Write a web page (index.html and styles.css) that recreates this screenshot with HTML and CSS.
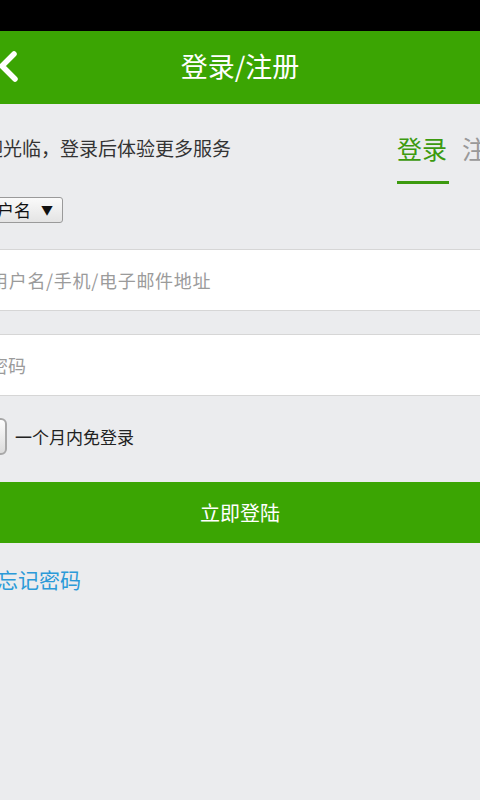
FILE: index.html
```html
<!DOCTYPE html>
<html>
<head>
    <title>登录/注册</title>
    <link rel="stylesheet" href="styles.css">
</head>
<body>
    <div class="status-bar"></div>
    <div class="header">
        <svg class="back" width="24" height="34" viewBox="0 0 24 34">
            <polyline points="18,4 6,16 19,29" fill="none" stroke="#fff" stroke-width="5.5" stroke-linecap="round" stroke-linejoin="round"/>
        </svg>
        <h1>登录/注册</h1>
        <span></span>
    </div>

    <div class="content">
        <div class="top-row">
            <p class="welcome">欢迎光临，登录后体验更多服务</p>
            <div class="tabs">
                <span class="tab active">登录</span>
                <span class="tab">注册</span>
            </div>
        </div>

        <div class="select">用户名<span class="arrow">▼</span></div>

        <div class="field wide">用户名/手机/电子邮件地址</div>
        <div class="field">密码</div>

        <div class="remember">
            <span class="checkbox"></span>
            <span>一个月内免登录</span>
        </div>

        <div class="login-btn">立即登陆</div>

        <a class="forgot" href="#">忘记密码</a>
    </div>
</body>
</html>
```

FILE: styles.css
```css
body {
    margin: 0;
    width: 480px;
    height: 800px;
    overflow: hidden;
    background: #ebecee;
    font-family: "Noto Sans CJK SC", sans-serif;
    color: #333;
}

.status-bar {
    height: 31px;
    background: #000;
}

.header {
    height: 73px;
    background: #3ba503;
    display: grid;
    grid-template-columns: 60px 1fr 60px;
    align-items: center;
}

.back {
    margin-left: -4px;
    margin-top: -1px;
}

.header h1 {
    margin: 0 0 4px;
    text-align: center;
    color: #fff;
    font-size: 27px;
    font-weight: normal;
    line-height: 30px;
}

.content {
    margin-left: -40px;
    width: 560px;
}

.top-row {
    display: flex;
    padding-top: 29px;
}

.welcome {
    margin: 0 0 0 5px;
    font-size: 19px;
    line-height: 30px;
}

.tabs {
    margin-left: auto;
    margin-right: 6px;
    display: flex;
    gap: 13px;
}

.tab {
    font-size: 25px;
    line-height: 30px;
    color: #999;
    width: 52px;
    height: 48px;
}

.tab.active {
    color: #3c9a0f;
    border-bottom: 3px solid #3c9a0f;
}

.select {
    display: inline-block;
    margin: 13px 0 0 15px;
    height: 24px;
    line-height: 24px;
    padding: 0 9px 0 4px;
    border: 1px solid #9a9a9a;
    border-radius: 3px;
    background: linear-gradient(#fafafa, #e4e4e4);
    font-size: 17px;
    color: #111;
}

.arrow {
    font-size: 12px;
    margin-left: 10px;
    vertical-align: 2px;
}

.field {
    margin-top: 26px;
    height: 60px;
    line-height: 60px;
    background: #fff;
    border-top: 1px solid #d6d6d6;
    border-bottom: 1px solid #d6d6d6;
    padding-left: 30px;
    font-size: 18px;
    color: #9b9b9b;
}

.field.wide {
    letter-spacing: 0.7px;
}

.field + .field {
    margin-top: 23px;
}

.remember {
    display: flex;
    align-items: center;
    margin: 22px 0 0 15px;
    font-size: 17px;
    color: #222;
}

.checkbox {
    width: 28px;
    height: 33px;
    border: 2px solid #a8a8a8;
    border-radius: 6px;
    background: linear-gradient(#fdfdfd, #dcdcdc);
    margin-right: 8px;
}

.login-btn {
    margin-top: 27px;
    margin-left: 40px;
    width: 480px;
    height: 61px;
    line-height: 61px;
    background: #3ba503;
    color: #fff;
    text-align: center;
    font-size: 20px;
}

.forgot {
    display: block;
    margin: 21px 0 0 37px;
    font-size: 21px;
    line-height: 30px;
    color: #2b9ad8;
    text-decoration: none;
}
```
